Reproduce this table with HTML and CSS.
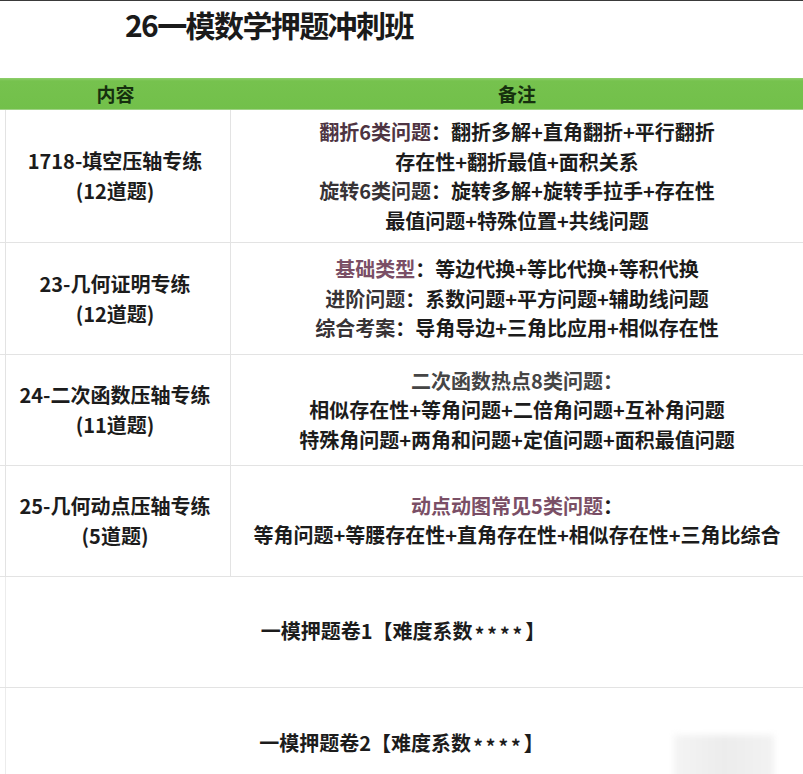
FILE: index.html
```html
<!DOCTYPE html>
<html lang="zh-CN">
<head>
<meta charset="utf-8">
<title>26一模数学押题冲刺班</title>
<link rel="stylesheet" href="styles.css">
</head>
<body>
<div class="page">
  <div class="title-bar"><h1 class="title">26一模数学押题冲刺班</h1></div>
  <div class="sheet">
    <div class="row head">
      <div class="cell left">内容</div>
      <div class="cell right">备注</div>
    </div>
    <div class="row r1">
      <div class="cell left"><p>1718-填空压轴专练</p><p>(12道题)</p></div>
      <div class="cell right">
        <p><span class="lab lab-a">翻折6类问题</span>：翻折多解+直角翻折+平行翻折</p>
        <p>存在性+翻折最值+面积关系</p>
        <p><span class="lab lab-b">旋转6类问题</span>：旋转多解+旋转手拉手+存在性</p>
        <p>最值问题+特殊位置+共线问题</p>
      </div>
    </div>
    <div class="row r2">
      <div class="cell left"><p>23-几何证明专练</p><p>(12道题)</p></div>
      <div class="cell right">
        <p><span class="lab lab-c">基础类型</span>：等边代换+等比代换+等积代换</p>
        <p><span class="lab lab-b">进阶问题</span>：系数问题+平方问题+辅助线问题</p>
        <p><span class="lab lab-b">综合考案</span>：导角导边+三角比应用+相似存在性</p>
      </div>
    </div>
    <div class="row r3">
      <div class="cell left"><p>24-二次函数压轴专练</p><p>(11道题)</p></div>
      <div class="cell right">
        <p><span class="lab lab-d">二次函数热点8类问题：</span></p>
        <p>相似存在性+等角问题+二倍角问题+互补角问题</p>
        <p>特殊角问题+两角和问题+定值问题+面积最值问题</p>
      </div>
    </div>
    <div class="row r4">
      <div class="cell left"><p>25-几何动点压轴专练</p><p>(5道题)</p></div>
      <div class="cell right">
        <p><span class="lab lab-c">动点动图常见5类问题</span>：</p>
        <p>等角问题+等腰存在性+直角存在性+相似存在性+三角比综合</p>
      </div>
    </div>
    <div class="row full r5">
      <div class="cell wide"><p>一模押题卷1【难度系数<span class="stars">****</span>】</p></div>
    </div>
    <div class="row full r6">
      <div class="cell wide"><p>一模押题卷2【难度系数<span class="stars">****</span>】</p></div>
    </div>
  </div>
  <div class="smudge"></div>
</div>
</body>
</html>
```

FILE: styles.css
```css
* { box-sizing: border-box; }
html, body {
  margin: 0;
  padding: 0;
  background: #ffffff;
}
body {
  font-family: "Noto Sans CJK SC", "Noto Sans", sans-serif;
  color: #1c1c1c;
  width: 803px;
  height: 774px;
  overflow: hidden;
}
.page {
  position: relative;
  width: 803px;
  height: 774px;
  border-top: 1px solid #3a3a3a;
  overflow: hidden;
}
.title-bar {
  height: 77px;
  padding: 5px 0 0 125px;
}
.title {
  margin: 0;
  font-size: 30px;
  line-height: 36px;
  font-weight: 700;
  color: #1a1a1a;
  letter-spacing: -1.6px;
}
.sheet {
  width: 803px;
}
.row {
  display: flex;
  border-bottom: 1px solid #e3e3e3;
}
.cell {
  display: flex;
  flex-direction: column;
  justify-content: center;
  align-items: center;
  text-align: center;
  font-weight: 700;
}
.cell p { margin: 0; white-space: nowrap; }
.left {
  width: 231px;
  flex: none;
  border-right: 1px solid #e3e3e3;
  box-shadow: inset 5px 0 0 #ffffff, inset 6px 0 0 #e3e3e3;
  font-size: 20px;
  line-height: 30px;
}
.right {
  flex: 1;
  font-size: 20px;
  line-height: 29.5px;
}
.head {
  height: 32px;
  background: linear-gradient(#8fcf6c 0, #76c24e 3px, #72c04a 100%);
  border-bottom: 1px solid #9fd285;
}
.head .cell {
  color: #16300e;
  font-size: 19px;
  line-height: 30px;
}
.head .left {
  border-right: none;
  box-shadow: none;
}
.r1 { height: 133px; }
.r2 { height: 112px; }
.r3 { height: 111px; }
.r4 { height: 111px; }
.r5 { height: 111px; }
.r6 { height: 112px; border-bottom: none; }
.r4 .right { padding-bottom: 2px; }
.wide {
  flex: 1;
  font-size: 20px;
  line-height: 30px;
  box-shadow: inset 5px 0 0 #ffffff, inset 6px 0 0 #ececec;
}
.r5 .wide { padding-left: 3px; }
.stars {
  font-size: 19px;
  letter-spacing: 3px;
  vertical-align: -3px;
  margin-left: 2px;
}
.lab-a { color: #4e3442; }
.lab-b { color: #383336; }
.lab-c { color: #7a4f66; }
.lab-d { color: #454545; }
.smudge {
  position: absolute;
  left: 674px;
  top: 734px;
  width: 100px;
  height: 45px;
  background: linear-gradient(90deg, #f4f4f4, #ececec 50%, #f2f2f2);
  filter: blur(3px);
}
```
